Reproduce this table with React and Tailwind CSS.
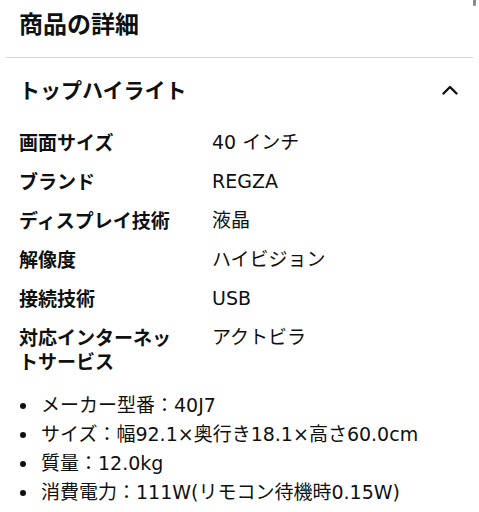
import React from "react";

const rows = [
  ["画面サイズ", "40 インチ"],
  ["ブランド", "REGZA"],
  ["ディスプレイ技術", "液晶"],
  ["解像度", "ハイビジョン"],
  ["接続技術", "USB"],
  ["対応インターネットサービス", "アクトビラ"],
];

const bullets = [
  "メーカー型番：40J7",
  "サイズ：幅92.1×奥行き18.1×高さ60.0cm",
  "質量：12.0kg",
  "消費電力：111W(リモコン待機時0.15W)",
];

export default function App() {
  return (
    <div
      className="relative w-[479px] h-[512px] overflow-hidden bg-white text-[#0f1111]"
      style={{ fontFamily: '"Noto Sans CJK JP", sans-serif' }}
    >
      {/* scroll indicator */}
      <div className="absolute right-[3px] top-0 w-[3px] h-[6px] rounded-b bg-[#8a8a8a]" />

      <div className="px-[19px] pt-[7px]">
        <h2 className="text-[24px] leading-[32px] font-bold">商品の詳細</h2>
      </div>
      <div className="mx-[6px] mt-[18px] border-t border-[#d5d9d9]" />

      <div className="px-[19px] pt-[17px] flex items-center justify-between">
        <h3 className="text-[21px] leading-[28px] font-bold">トップハイライト</h3>
        <svg width="16" height="11" viewBox="0 0 16 11" className="mr-[2px]">
          <path d="M1.5 9.5 L8 3 L14.5 9.5" fill="none" stroke="#0f1111" strokeWidth="2.4" strokeLinecap="round" strokeLinejoin="round" />
        </svg>
      </div>

      <div className="px-[19px] pt-[27px] flex flex-col gap-[15px]">
        {rows.map(([k, v]) => (
          <div key={k} className="flex text-[19px] leading-[24px]">
            <div className="w-[165px] mr-[28px] font-bold">{k}</div>
            <div className="flex-1 font-['DejaVu_Sans','Noto_Sans_CJK_JP',sans-serif]">{v}</div>
          </div>
        ))}
      </div>

      <ul className="pl-[19px] pt-[18px] text-[19px] leading-[29px] font-['DejaVu_Sans','Noto_Sans_CJK_JP',sans-serif]">
        {bullets.map((b) => (
          <li key={b} className="flex items-center">
            <span className="w-[22px] flex pl-[1px]">
              <span className="w-[6px] h-[6px] rounded-full bg-[#0f1111]" />
            </span>
            <span>{b}</span>
          </li>
        ))}
      </ul>
    </div>
  );
}
